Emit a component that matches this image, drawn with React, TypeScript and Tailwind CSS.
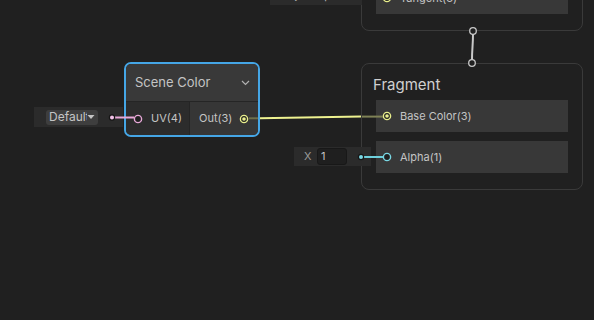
import React from "react";

const font = { fontFamily: "Inter, 'Noto Sans', sans-serif" };

function Port({ color, filled = false }: { color: string; filled?: boolean }) {
    return (
        <svg width="10" height="10" viewBox="0 0 10 10" className="shrink-0">
            <circle cx="5" cy="5" r="3.6" fill="#202020" stroke={color} strokeWidth="1.4" />
            {filled && <circle cx="5" cy="5" r="1.8" fill={color} />}
        </svg>
    );
}

function InputRow({ label, port, filled }: { label: string; port: string; filled?: boolean }) {
    return (
        <div className="h-[32px] bg-[#383838] flex items-center pl-[6px] gap-[8px]">
            <Port color={port} filled={filled} />
            <span className="text-[11px] text-[#c4c4c4]">{label}</span>
        </div>
    );
}

export default function App() {
    return (
        <div className="relative w-[594px] h-[320px] bg-[#202020] overflow-hidden" style={font}>
            {/* Vertex node, mostly off screen */}
            <div className="absolute left-[361px] top-[-60px] w-[222px] h-[91px] rounded-lg border border-[#3a3a3a] px-[14px] pt-[41px]">
                <InputRow label="Tangent(3)" port="#e8ee8c" filled />
            </div>
            <div className="absolute left-[270px] top-[-14px] w-[92px] h-[19px] bg-[#2b2b2b] flex items-center pl-[10px] text-[11px] text-[#b8b8b8]">
                Object Space
            </div>

            {/* Fragment node */}
            <div className="absolute left-[361px] top-[63px] w-[222px] h-[127px] rounded-lg border border-[#3a3a3a] px-[14px]">
                <div className="text-[15px] text-[#d0d0d0] pt-[10px] h-[36px] -ml-[3px]">Fragment</div>
                <div className="flex flex-col gap-[9px]">
                    <InputRow label="Base Color(3)" port="#e8ee8c" filled />
                    <InputRow label="Alpha(1)" port="#7ad8e4" />
                </div>
            </div>

            {/* Default UV field */}
            <div className="absolute left-[34px] top-[107px] w-[89px] h-[20px] bg-[#2b2b2b] flex items-center pl-[12px]">
                <div className="h-[15px] w-[52px] bg-[#3e3e3e] rounded-[3px] flex items-center pl-[3px] text-[12px] text-[#c4c4c4]">
                    <span className="w-[38px] overflow-hidden whitespace-nowrap">Default</span>
                    <svg width="8" height="6" viewBox="0 0 8 6">
                        <path d="M0.5 1 L7.5 1 L4 5 Z" fill="#c4c4c4" />
                    </svg>
                </div>
            </div>

            {/* X 1 field */}
            <div className="absolute left-[294px] top-[147px] w-[77px] h-[19px] bg-[#2b2b2b] flex items-center pl-[10px] text-[11px]">
                <span className="text-[#9a9a9a] w-[13px]">X</span>
                <div className="h-[17px] w-[30px] bg-[#1f1f1f] border border-[#181818] rounded-[3px] flex items-center pl-[3px] text-[#c4c4c4]">1</div>
            </div>

            {/* Scene Color node */}
            <div className="absolute left-[124px] top-[62px] w-[136px] h-[75px] rounded-[7px] border-2 border-[#45a6e6] overflow-hidden flex flex-col bg-[#2c2c2c]">
                <div className="h-[38px] bg-[#393939] flex items-center justify-between pl-[9px] pr-[8px] border-b border-[#252525]">
                    <span className="text-[13px] text-[#c4c4c4]">Scene Color</span>
                    <svg width="9" height="6" viewBox="0 0 9 6">
                        <path d="M1 1 L4.5 4.5 L8 1" stroke="#b0b0b0" strokeWidth="1.2" fill="none" />
                    </svg>
                </div>
                <div className="flex flex-1">
                    <div className="w-[64px] bg-[#2c2c2c] flex items-center pl-[7px] gap-[8px] border-r border-[#252525]">
                        <Port color="#e8a8d8" />
                        <span className="text-[11px] text-[#c4c4c4]">UV(4)</span>
                    </div>
                    <div className="flex-1 bg-[#363636] flex items-center pl-[9px] gap-[7px]">
                        <span className="text-[11px] text-[#c4c4c4]">Out(3)</span>
                        <Port color="#e8ee8c" filled />
                    </div>
                </div>
            </div>

            {/* wires */}
            <svg className="absolute inset-0 pointer-events-none" width="594" height="320">
                <path d="M473 34 C473 46 472 48 472 60" stroke="#c8c8c8" strokeWidth="2" fill="none" />
                <circle cx="473" cy="31" r="3.3" fill="#202020" stroke="#c8c8c8" strokeWidth="1.3" />
                <circle cx="472" cy="63" r="3.3" fill="#202020" stroke="#c8c8c8" strokeWidth="1.3" />
                <line x1="260" y1="118.3" x2="361" y2="116.6" stroke="#eef290" strokeWidth="2" />
                <line x1="362" y1="116.6" x2="383" y2="116.6" stroke="#7f8256" strokeWidth="2" />
                <line x1="249" y1="118.3" x2="258" y2="118.3" stroke="#6e704c" strokeWidth="2" />
                <line x1="112" y1="117.5" x2="134" y2="117.5" stroke="#e8a8d8" strokeWidth="2" />
                <circle cx="112" cy="117.5" r="2.6" fill="#f2c2e8" stroke="#161616" strokeWidth="1.2" />
                <line x1="361" y1="157" x2="383" y2="157" stroke="#6ed0dc" strokeWidth="2" />
                <circle cx="361" cy="157" r="2.6" fill="#7ad8e4" stroke="#161616" strokeWidth="1.2" />
            </svg>
        </div>
    );
}
